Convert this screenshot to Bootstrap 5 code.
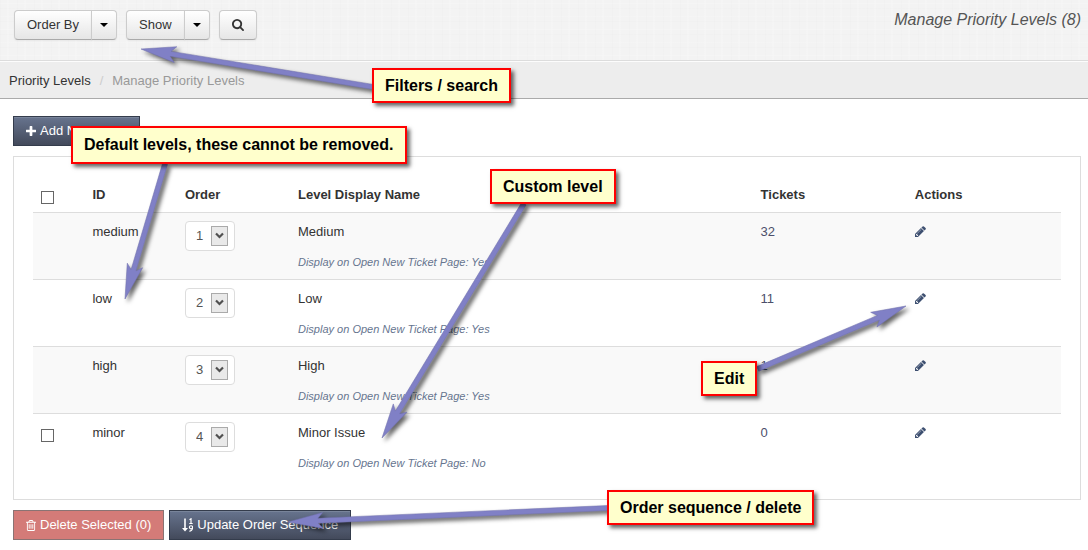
<!DOCTYPE html>
<html lang="en">
<head>
<meta charset="utf-8">
<meta name="viewport" content="width=device-width, initial-scale=1">
<title>Manage Priority Levels</title>
<link href="https://cdn.jsdelivr.net/npm/bootstrap@5.3.0/dist/css/bootstrap.min.css" rel="stylesheet">
<style>
  body { font-family: "Liberation Sans", Arial, sans-serif; font-size: 13px; line-height: 20px; color: #333; background: #fff; }
  .toolbar {
    height: 62px; padding: 10px 7px 0 14px; border-bottom: 1px solid #fcfcfc; box-shadow: inset 0 -1px #dcdcdc;
    background:
      repeating-linear-gradient(90deg, rgba(0,0,0,.008) 0 1px, transparent 1px 7px, rgba(255,255,255,.15) 7px 9px, transparent 9px 17px),
      repeating-linear-gradient(0deg, rgba(0,0,0,.008) 0 1px, transparent 1px 5px, rgba(255,255,255,.15) 5px 6px, transparent 6px 13px),
      #f3f3f3;
  }
  .tool-groups { gap: 9px; }
  .page-title { font-size: 16px; font-style: italic; font-weight: 400; color: #555; line-height: 20px; margin: 0; }
  .btn { font-size: 13px; line-height: 20px; padding: 4px 12px; }
  .btn-tool { height: 30px; color: #333; border: 1px solid #ccc; border-bottom-color: #aaa; border-radius: 4px; background: linear-gradient(#fff, #e6e6e6); box-shadow: 0 1px 2px rgba(0,0,0,.05); }
  .btn-tool:hover { color: #333; background: #e6e6e6; }
  .btn-caret { width: 26px; padding: 4px 0; }
  .btn-caret::after { margin: 0; color: #000; border-width: 4px 4px 0; vertical-align: 2px; }
  .crumbs { height: 37px; padding: 9px 9px 0; background: #ededed; border-bottom: 1px solid #aaa; }
  .crumbs .breadcrumb { --bs-breadcrumb-item-padding-x: 9px; --bs-breadcrumb-divider-color: #ccc; --bs-breadcrumb-item-active-color: #999; font-size: 13px; margin: 0; }
  .crumbs a { color: #333; text-decoration: none; }
  .content { padding: 17px 7px 9px 13px; }
  .btn-flat { height: 30px; border-radius: 0; color: #fff; border: 1px solid #343c4c; background: linear-gradient(#67748e, #434a5b); box-shadow: inset 0 1px rgba(255,255,255,.12); display: inline-flex; align-items: center; gap: 4px; }
  .btn-flat:hover { color: #fff; background: #434a5b; }
  .btn-remove, .btn-remove:hover { background: #d47b78; border-color: #8a7373; box-shadow: none; }
  .action-row { gap: 5px; }
  .panel { border: 1px solid #ddd; padding: 20px 19px 19px; margin: 10px 0; }
  .levels { table-layout: fixed; width: 100%; margin: 0; }
  .levels th, .levels td { text-align: left; vertical-align: top; }
  .levels th { height: 35px; padding: 8px 8px 6px; }
  .levels td { height: 67px; padding: 9px 8px 7px; border-top: 1px solid #ddd; }
  .levels tbody tr:nth-child(odd) { background: #f9f9f9; }
  .levels .d-block { line-height: 20px; }
  .levels .note { margin-top: 10px; font-size: 11px; font-style: italic; color: #66758f; }
  .levels td a { color: #4c4f6b; text-decoration: none; }
  .levels td .glyph { vertical-align: -1px; color: #3d4f70; }
  .pick { appearance: none; display: block; width: 13px; height: 13px; margin: 6px 0 0; border: 1px solid #666; background: #fff; }
  .pick:checked { background: #67748e; }
  .levels td.order-cell { padding-top: 8px; }
  .order-pick {
    appearance: none; display: block; width: 50px; height: 30px; padding: 0 0 0 10px; color: #555; border: 1px solid #ddd; border-radius: 4px;
    background: #fff url("data:image/svg+xml,%3Csvg xmlns='http://www.w3.org/2000/svg' width='17' height='20'%3E%3Crect x='.5' y='.5' width='16' height='19' fill='%23e9e9e9' stroke='%23aaa'/%3E%3Cpath d='M5 7.500l3.500 3.500 3.500-3.500' fill='none' stroke='%23505050' stroke-width='2.200'/%3E%3C/svg%3E") no-repeat right 6px center;
  }
  .glyph { fill: currentColor; flex: none; }
  .arrows { position: absolute; left: 0; top: 0; width: 100%; height: 100%; pointer-events: none; overflow: visible; fill: #8080c6; stroke: #7070ad; stroke-width: .5; filter: drop-shadow(3px 3px 2px rgba(0,0,0,.6)); }
  .callout { position: absolute; padding: 6px 11px; border: 2px solid #f00; background: #ffffcc; color: #000; font-size: 16px; font-weight: 700; line-height: 19px; white-space: nowrap; box-shadow: 3px 3px 4px rgba(0,0,0,.6); }
  .callout-tall { padding: 7px 12px 8px 11px; }
</style>
</head>
<body>
<svg class="d-none">
  <symbol id="pencil" viewBox="128 128 1536 1536"><path d="M491 1536l91-91-235-235-91 91v107h128v128h107zm523-928q0-22-22-22-10 0-17 7l-542 542q-7 7-7 17 0 22 22 22 10 0 17-7l542-542q7-7 7-17zm-54-192l416 416-832 832h-416v-416zm683 96q0 53-37 90l-166 166-416-416 166-165q36-38 90-38 53 0 91 38l235 234q37 39 37 91z"/></symbol>
</svg>
<div class="position-relative">
  <header class="toolbar d-flex justify-content-between align-items-start">
    <div class="tool-groups d-flex">
      <div class="btn-group">
        <button type="button" class="btn btn-tool">Order By</button>
        <button type="button" class="btn btn-tool btn-caret dropdown-toggle" aria-label="Order by options"></button>
      </div>
      <div class="btn-group">
        <button type="button" class="btn btn-tool">Show</button>
        <button type="button" class="btn btn-tool btn-caret dropdown-toggle" aria-label="Show options"></button>
      </div>
      <button type="button" class="btn btn-tool d-flex align-items-center" aria-label="Search">
        <svg class="glyph" width="12" height="12" viewBox="64 128 1664 1664"><path d="M1216 832q0-185-131.500-316.500t-316.500-131.500-316.500 131.500-131.500 316.500 131.500 316.500 316.500 131.500 316.500-131.500 131.500-316.500zm512 832q0 52-38 90t-90 38q-54 0-90-38l-343-342q-179 124-399 124-143 0-273.500-55.500t-225-150-150-225-55.500-273.500 55.500-273.500 150-225 225-150 273.500-55.500 273.500 55.500 225 150 150 225 55.500 273.500q0 220-124 399l343 343q37 37 37 90z"/></svg>
      </button>
    </div>
    <h1 class="page-title">Manage Priority Levels (8)</h1>
  </header>

  <nav class="crumbs" aria-label="breadcrumb">
    <ol class="breadcrumb">
      <li class="breadcrumb-item"><a href="#">Priority Levels</a></li>
      <li class="breadcrumb-item active" aria-current="page">Manage Priority Levels</li>
    </ol>
  </nav>

  <main class="content">
    <button type="button" class="btn btn-flat">
      <svg class="glyph" width="10" height="10" viewBox="192 128 1408 1408"><path d="M1600 736v192q0 40-28 68t-68 28h-416v416q0 40-28 68t-68 28h-192q-40 0-68-28t-28-68v-416h-416q-40 0-68-28t-28-68v-192q0-40 28-68t68-28h416v-416q0-40 28-68t68-28h192q40 0 68 28t28 68v416h416q40 0 68 28t28 68z"/></svg>
      Add New Level
    </button>

    <div class="panel">
      <table class="levels">
        <colgroup><col style="width:5%"><col style="width:9%"><col style="width:11%"><col style="width:45%"><col style="width:15%"><col style="width:15%"></colgroup>
        <thead>
          <tr><th><input type="checkbox" class="pick" aria-label="Select all"></th><th>ID</th><th>Order</th><th>Level Display Name</th><th>Tickets</th><th>Actions</th></tr>
        </thead>
        <tbody>
          <tr>
            <td></td><td>medium</td>
            <td class="order-cell"><select class="order-pick" aria-label="Order of Medium"><option selected>1</option><option>2</option><option>3</option><option>4</option></select></td>
            <td><span class="d-block">Medium</span><span class="d-block note">Display on Open New Ticket Page: Yes</span></td>
            <td><a href="#">32</a></td>
            <td><a href="#" aria-label="Edit Medium"><svg class="glyph" width="11" height="11"><use href="#pencil"/></svg></a></td>
          </tr>
          <tr>
            <td></td><td>low</td>
            <td class="order-cell"><select class="order-pick" aria-label="Order of Low"><option>1</option><option selected>2</option><option>3</option><option>4</option></select></td>
            <td><span class="d-block">Low</span><span class="d-block note">Display on Open New Ticket Page: Yes</span></td>
            <td><a href="#">11</a></td>
            <td><a href="#" aria-label="Edit Low"><svg class="glyph" width="11" height="11"><use href="#pencil"/></svg></a></td>
          </tr>
          <tr>
            <td></td><td>high</td>
            <td class="order-cell"><select class="order-pick" aria-label="Order of High"><option>1</option><option>2</option><option selected>3</option><option>4</option></select></td>
            <td><span class="d-block">High</span><span class="d-block note">Display on Open New Ticket Page: Yes</span></td>
            <td><a href="#">1</a></td>
            <td><a href="#" aria-label="Edit High"><svg class="glyph" width="11" height="11"><use href="#pencil"/></svg></a></td>
          </tr>
          <tr>
            <td><input type="checkbox" class="pick" aria-label="Select Minor Issue"></td><td>minor</td>
            <td class="order-cell"><select class="order-pick" aria-label="Order of Minor Issue"><option>1</option><option>2</option><option>3</option><option selected>4</option></select></td>
            <td><span class="d-block">Minor Issue</span><span class="d-block note">Display on Open New Ticket Page: No</span></td>
            <td><a href="#">0</a></td>
            <td><a href="#" aria-label="Edit Minor Issue"><svg class="glyph" width="11" height="11"><use href="#pencil"/></svg></a></td>
          </tr>
        </tbody>
      </table>
    </div>

    <div class="action-row d-flex">
      <button type="button" class="btn btn-flat btn-remove">
        <svg class="glyph" width="10" height="11" viewBox="192 128 1408 1536"><path d="M704 736v576q0 14-9 23t-23 9h-64q-14 0-23-9t-9-23v-576q0-14 9-23t23-9h64q14 0 23 9t9 23zm256 0v576q0 14-9 23t-23 9h-64q-14 0-23-9t-9-23v-576q0-14 9-23t23-9h64q14 0 23 9t9 23zm256 0v576q0 14-9 23t-23 9h-64q-14 0-23-9t-9-23v-576q0-14 9-23t23-9h64q14 0 23 9t9 23zm128 724v-948h-896v948q0 22 7 40.500t14.500 27 10.500 8.500h832q3 0 10.500-8.500t14.500-27 7-40.500zm-672-1076h448l-48-117q-7-9-17-11h-317q-10 2-17 11zm928 32v64q0 14-9 23t-23 9h-96v948q0 83-47 143.500t-113 60.500h-832q-66 0-113-58.500t-47-141.500v-952h-96q-14 0-23-9t-9-23v-64q0-14 9-23t23-9h309l70-167q15-37 54-63t79-26h320q40 0 79 26t54 63l70 167h309q14 0 23 9t9 23z"/></svg>
        Delete Selected (0)
      </button>
      <button type="button" class="btn btn-flat">
        <svg width="11" height="14" viewBox="0 0 11 14" fill="none" stroke="currentColor"><path d="M3 .5v11" stroke-width="1.600"/><path d="M0 10h6l-3 3.500z" fill="currentColor" stroke="none"/><path d="M7.500 1.800l1.500-1v4.700M7.300 5.500h3.400" stroke-width="1.200"/><circle cx="9" cy="9.300" r="1.600" stroke-width="1.100"/><path d="M10.500 9.300q.1 3.500-3.200 3.900" stroke-width="1.100"/></svg>
        Update Order Sequence
      </button>
    </div>
  </main>

  <!-- Each arrow is drawn from its tip, then turned towards its callout -->
  <svg class="arrows" aria-hidden="true">
    <path transform="translate(141 49) rotate(9.300)" d="M0 0L35-8 30-2.500H236V2.500H30L35 8z"/>
    <path transform="translate(125 299) rotate(-73.500)" d="M0 0L35-8 30-2.500H141V2.500H30L35 8z"/>
    <path transform="translate(382 438) rotate(-58.800)" d="M0 0L35-8 30-2.500H274V2.500H30L35 8z"/>
    <path transform="translate(906 306) rotate(157)" d="M0 0L35-8 30-2.500H161V2.500H30L35 8z"/>
    <path transform="translate(288 522) rotate(-2.500)" d="M0 0L35-8 30-2.500H320V2.500H30L35 8z"/>
  </svg>
  <div class="callout" style="left:372px;top:68px">Filters / search</div>
  <div class="callout callout-tall" style="left:71px;top:126px">Default levels, these cannot be removed.</div>
  <div class="callout" style="left:490px;top:169px">Custom level</div>
  <div class="callout" style="left:701px;top:361px">Edit</div>
  <div class="callout" style="left:607px;top:490px">Order sequence / delete</div>
</div>
<script src="https://cdn.jsdelivr.net/npm/bootstrap@5.3.0/dist/js/bootstrap.bundle.min.js"></script>
</body>
</html>
